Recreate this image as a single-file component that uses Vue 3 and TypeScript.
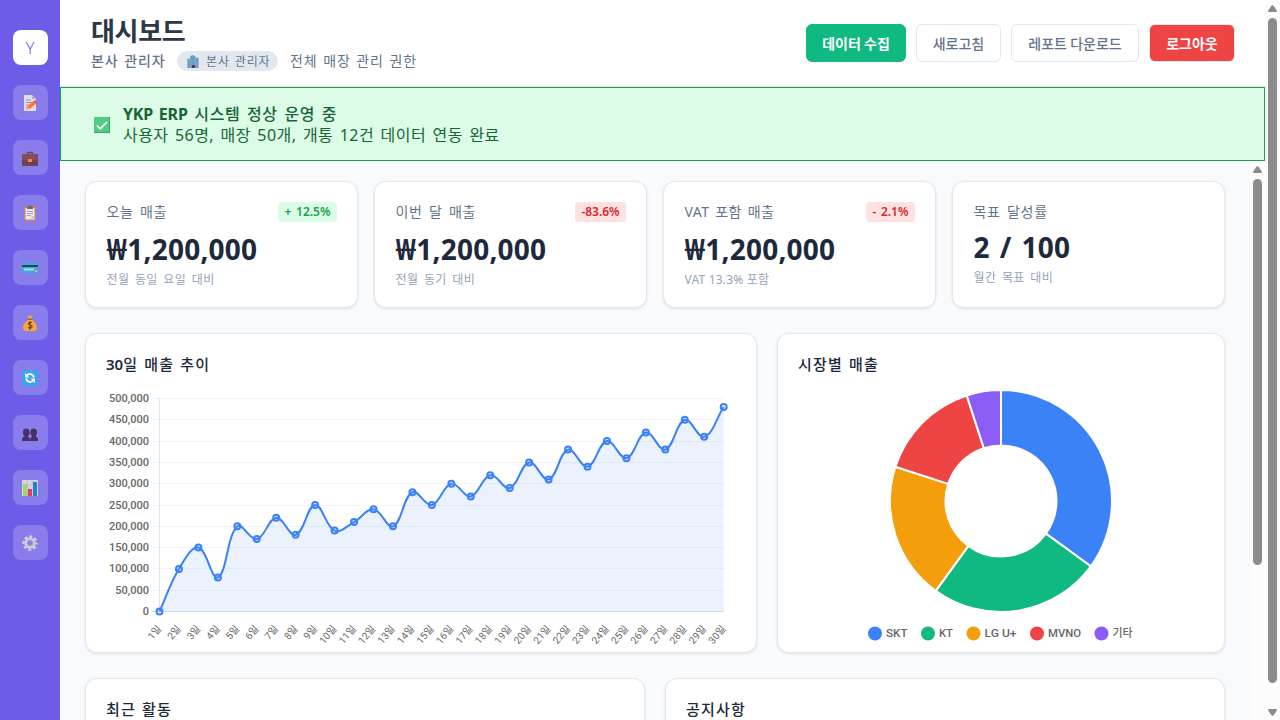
<script setup lang="ts">
interface Point { x: number; y: number }

const navIcons = ['memo', 'briefcase', 'clipboard', 'card', 'money', 'refresh', 'people', 'bars', 'gear']

const stats = [
  { label: '오늘 매출', value: '₩1,200,000', note: '전월 동일 요일 대비', badge: '+ 12.5%', tone: 'up', width: 59 },
  { label: '이번 달 매출', value: '₩1,200,000', note: '전월 동기 대비', badge: '-83.6%', tone: 'down', width: 51 },
  { label: 'VAT 포함 매출', value: '₩1,200,000', note: 'VAT 13.3% 포함', badge: '- 2.1%', tone: 'down', width: 49 },
  { label: '목표 달성률', value: '2 / 100', note: '월간 목표 대비', badge: '', tone: '', width: 0 },
]

// Daily sales in thousands of won
const sales = [0, 100, 150, 80, 200, 170, 220, 180, 250, 190, 210, 240, 200, 280, 250, 300, 270, 320, 290, 350, 310, 380, 340, 400, 360, 420, 380, 450, 410, 480]

const left = 73.5
const right = 637.7
const top = 64.5
const bottom = 277.5

const points: Point[] = sales.map((v, i) => ({
  x: left + (i * (right - left)) / (sales.length - 1),
  y: bottom - (v / 500) * (bottom - top),
}))

const ticks = Array.from({ length: 11 }, (_, i) => ({
  y: Math.floor(top + (i * (bottom - top)) / 10) + 0.5,
  label: ((10 - i) * 50000).toLocaleString('en-US'),
}))

function smooth(pts: Point[], tension: number): string {
  const clamp = (y: number) => Math.min(bottom, Math.max(top, y))
  const controls = pts.map((p, i) => {
    const a = pts[Math.max(0, i - 1)]
    const b = pts[Math.min(pts.length - 1, i + 1)]
    const d1 = Math.hypot(p.x - a.x, p.y - a.y)
    const d2 = Math.hypot(b.x - p.x, b.y - p.y)
    const f1 = (tension * d1) / (d1 + d2)
    const f2 = (tension * d2) / (d1 + d2)
    return {
      before: { x: p.x - f1 * (b.x - a.x), y: clamp(p.y - f1 * (b.y - a.y)) },
      after: { x: p.x + f2 * (b.x - a.x), y: clamp(p.y + f2 * (b.y - a.y)) },
    }
  })
  let d = `M${pts[0].x} ${pts[0].y}`
  for (let i = 1; i < pts.length; i++) {
    const c1 = controls[i - 1].after
    const c2 = controls[i].before
    d += `C${c1.x} ${c1.y} ${c2.x} ${c2.y} ${pts[i].x} ${pts[i].y}`
  }
  return d
}

const linePath = smooth(points, 0.4)
const areaPath = `${linePath}V${bottom}H${left}Z`

const shares = [
  { name: 'SKT', value: 35, color: '#3b82f6', x: 90, len: 21.5 },
  { name: 'KT', value: 25, color: '#10b981', x: 143, len: 14 },
  { name: 'LG U+', value: 20, color: '#f59e0b', x: 188.5, len: 32 },
  { name: 'MVNO', value: 15, color: '#ef4444', x: 252, len: 33 },
  { name: '기타', value: 5, color: '#8b5cf6', x: 316.5, len: 20 },
]

const cx = 223
const cy = 167
function slice(from: number, to: number): string {
  const at = (pct: number, r: number) => {
    const a = (pct / 100) * Math.PI * 2
    return `${cx + r * Math.sin(a)} ${cy - r * Math.cos(a)}`
  }
  return `M${at(from, 111)}A111 111 0 0 1 ${at(to, 111)}L${at(to, 55.5)}A55.5 55.5 0 0 0 ${at(from, 55.5)}Z`
}
let total = 0
const slices = shares.map((s) => {
  const from = total
  total += s.value
  return { color: s.color, d: slice(from, total) }
})
</script>

<template>
  <div class="app">
    <nav class="sidebar">
      <div class="logo">Y</div>
      <div v-for="icon in navIcons" :key="icon" class="nav-item">
        <svg viewBox="0 0 16 16" width="16" height="16">
          <g v-if="icon === 'memo'">
            <path d="M2 0h8l4 4v12H2z" fill="#e6e1ea" /><path d="M10 0v4h4z" fill="#b9b2c6" />
            <path d="M4 5h5M4 7.500h7M4 10h3M4 12.500h2" stroke="#9b95a8" />
            <path d="M4.500 14.500l1-3.500 6-5 2.500 2.800-6 5z" fill="#f97b2b" /><path d="M11.500 6l1.400-1 2.300 2.500L14 8.800z" fill="#f2495c" />
            <path d="M4.500 14.500l1-3.500 2.500 2.800z" fill="#fbb15a" />
          </g>
          <g v-else-if="icon === 'briefcase'" transform="translate(0 .5)">
            <path d="M5.500 4V3q0-1 1-1h3q1 0 1 1v1" fill="none" stroke="#69434e" stroke-width="1.300" />
            <rect y="3.500" width="16" height="12" rx="1" fill="#6d4048" /><path d="M0 4.500q0-1 1-1h14q1 0 1 1V9q-8 2-16 0z" fill="#804d50" />
            <rect x="6" y="8.500" width="4" height="3" rx=".5" fill="#f08b58" />
          </g>
          <g v-else-if="icon === 'clipboard'">
            <rect x="2" y="1" width="12" height="15" rx="1" fill="#c98556" /><path d="M3.500 3h9v11.500h-9z" fill="#f1edf6" /><path d="M12.500 11.500H9.500v3z" fill="#bdb4c8" />
            <path d="M5 1.500h1.500Q8-.5 9.500 1.500H11V4H5z" fill="#6a6374" /><path d="M5 6.500h6M5 8.500h6M5 10.500h4" stroke="#a39cac" stroke-width=".9" />
          </g>
          <g v-else-if="icon === 'card'" transform="translate(0 3)">
            <rect width="16" height="10" rx="1" fill="#32b4dc" /><path d="M0 2h16v2H0z" fill="#31384e" />
            <rect x="2" y="5.500" width="10" height="2" fill="#b9d8e3" /><rect x="13" y="7.500" width="2" height="1.500" fill="#fbc64a" />
          </g>
          <g v-else-if="icon === 'money'">
            <path d="M5.500 0l1.500 1 1-1 1 1 1.500-1-1 4h-3z" fill="#f4ac36" /><path d="M5.500 5h5q4.500 4 4.500 8 0 3-3 3H4q-3 0-3-3 0-4 4.500-8z" fill="#fbac2e" />
            <path d="M5.500 4.300h5" stroke="#a65a27" stroke-width="1.200" />
            <path d="M10 7.800Q8 6.600 6.700 8q-.7 1.500 1.300 2 2.500.5 2 2-1.300 1.700-3.800.4M8 6v9" fill="none" stroke="#694429" stroke-width="1.200" />
          </g>
          <g v-else-if="icon === 'refresh'">
            <rect width="16" height="16" rx="1" fill="#38a6ef" />
            <path d="M4.500 5.500Q8 2.500 11 5.500L12 7.500M11.500 10.500Q8 13.500 5 10.500L4 8.500" fill="none" stroke="#fff" stroke-width="1.900" />
            <path d="M3 3v4.500h4.500zM13 13V8.500H8.500z" fill="#fff" />
          </g>
          <g v-else-if="icon === 'people'" fill="#432c61" transform="translate(0 1)">
            <ellipse cx="4.300" cy="6.500" rx="3.300" ry="4" /><ellipse cx="11.700" cy="6.500" rx="3.300" ry="4" />
            <path d="M0 15v-2q0-2 2.500-2.500L3 9h3v2q2 .5 2 2 0-1.500 2-2V9h3l.5 1.500Q16 11 16 13v2z" />
            <path d="M8 11.500V15" stroke="#6d5a8c" stroke-width=".6" />
          </g>
          <g v-else-if="icon === 'bars'">
            <rect width="16" height="16" rx=".6" fill="#ded9e5" /><path d="M0 5h16M5.500 0v16M11 0v16" stroke="#b8b0c3" stroke-width=".6" />
            <rect x="1" y="4" width="4" height="12" fill="#9be25b" /><rect x="6" y="9" width="4" height="7" fill="#e63868" /><rect x="11" y="2" width="4" height="14" fill="#1687cb" />
          </g>
          <g v-else fill="none" stroke="#d3cede">
            <circle cx="8" cy="8" r="6.200" stroke-width="3" stroke-dasharray="2.900 1.969" stroke-dashoffset="1.450" />
            <circle cx="8" cy="8" r="4" stroke-width="3.400" /><circle cx="8" cy="8" r="2.800" stroke="#a39bb2" stroke-width="1" />
          </g>
        </svg>
      </div>
    </nav>

    <main class="main">
      <header class="header">
        <div>
          <h1>대시보드</h1>
          <div class="user">
            <span class="name">본사 관리자</span>
            <span class="role">
              <svg viewBox="0 0 14 14" width="14" height="13">
                <path d="M1 4h3V14H1zM10 3h3v11h-3z" fill="#8793aa" /><path d="M4 1l3-1 3 2v12H4z" fill="#729bb9" />
                <path d="M5.500 2v8M8 2v8M2.500 5v6M11.500 4v7" stroke="#48b7df" stroke-width="1.300" stroke-dasharray="2 .7" /><path d="M6 11h3v3H6z" fill="#3e3349" />
              </svg>
              <span>본사 관리자</span>
            </span>
            <span class="scope">전체 매장 관리 권한</span>
          </div>
        </div>
        <div class="actions">
          <button class="btn primary">데이터 수집</button>
          <button class="btn refresh">새로고침</button>
          <button class="btn report">레포트 다운로드</button>
          <button class="btn danger">로그아웃</button>
        </div>
      </header>

      <section class="banner">
        <svg viewBox="0 0 16 16" width="16" height="16">
          <rect width="16" height="16" rx="1" fill="#4dce82" /><path d="M0 15h16v1H0zM15 0h1v16h-1z" fill="#36a765" />
          <path d="M3 8.500l3.300 3.200L13 5" fill="none" stroke="#fff" stroke-width="1.700" />
        </svg>
        <div class="banner-text">
          <strong><b>YKP ERP</b> 시스템 정상 운영 중</strong>
          <span>사용자 56명, 매장 50개, 개통 12건 데이터 연동 완료</span>
        </div>
      </section>

      <div class="body">
        <div class="content">
          <div class="stats">
            <article v-for="s in stats" :key="s.label" class="card stat" :class="{ plain: !s.badge }">
              <div class="stat-head">
                <span class="label">{{ s.label }}</span>
                <span v-if="s.badge" class="badge" :class="s.tone" :style="{ width: s.width + 'px' }">{{ s.badge }}</span>
              </div>
              <div class="value">{{ s.value }}</div>
              <div class="note">{{ s.note }}</div>
            </article>
          </div>

          <div class="charts">
            <article class="card chart">
              <h2><b>30</b>일 매출 추이</h2>
              <svg class="plot" viewBox="0 0 670 318" width="670" height="318">
                <g v-for="t in ticks" :key="t.label">
                  <path :d="`M66 ${t.y}H${right}`" stroke="#f1f5f9" />
                  <text class="amount" x="63" :y="t.y + 3.500" text-anchor="end">{{ t.label }}</text>
                </g>
                <path :d="`M73.500 ${top}V${bottom}`" stroke="#e2e4e8" />
                <path :d="`M66 ${bottom}H${right}`" stroke="#dcdfe4" />
                <path :d="areaPath" fill="#3b82f6" fill-opacity=".1" />
                <path :d="linePath" fill="none" stroke="#3b82f6" stroke-width="2" />
                <circle v-for="(p, i) in points" :key="i" :cx="p.x" :cy="p.y" r="3" fill="#3b82f6" fill-opacity=".1" stroke="#3b82f6" stroke-width="2" />
                <text v-for="(p, i) in points" :key="'d' + i" class="day" :transform="`translate(${p.x + 2.500} 295) rotate(-50)`" text-anchor="end">{{ i + 1 }}일</text>
              </svg>
            </article>
            <article class="card chart">
              <h2>시장별 매출</h2>
              <svg class="plot" viewBox="0 0 446 318" width="446" height="318">
                <path v-for="s in slices" :key="s.color" :d="s.d" :fill="s.color" stroke="#fff" stroke-width="2" stroke-linejoin="bevel" />
                <g v-for="s in shares" :key="s.name">
                  <circle :cx="s.x + 7" cy="299.500" r="7" :fill="s.color" />
                  <text class="legend" :x="s.x + 18" y="303" :textLength="s.len" lengthAdjust="spacingAndGlyphs">{{ s.name }}</text>
                </g>
              </svg>
            </article>
          </div>

          <div class="lower">
            <article class="card"><h2>최근 활동</h2></article>
            <article class="card"><h2>공지사항</h2></article>
          </div>
        </div>
        <div class="scroll inner">
          <svg viewBox="0 0 9 7" width="9" height="7"><path d="M4.500 0Q5.500 0 9 6 9 7 8 7H1Q0 7 0 6 3.500 0 4.500 0z" /></svg>
          <i class="thumb"></i>
        </div>
      </div>
    </main>

    <div class="scroll outer">
      <svg viewBox="0 0 9 7" width="9" height="7"><path d="M4.500 0Q5.500 0 9 6 9 7 8 7H1Q0 7 0 6 3.500 0 4.500 0z" /></svg>
      <i class="thumb"></i>
      <svg class="down" viewBox="0 0 9 7" width="9" height="7"><path d="M4.500 7Q5.500 7 9 1 9 0 8 0H1Q0 0 0 1 3.500 7 4.500 7z" /></svg>
    </div>
  </div>
</template>

<style>
body { overflow: hidden; }
</style>

<style scoped>
* { box-sizing: border-box; }
.app { display: flex; width: 1280px; height: 720px; overflow: hidden; background: #f8fafc; font-family: "Noto Sans", "Noto Sans CJK KR", sans-serif; white-space: nowrap; }
svg { display: block; flex: none; }
.sidebar { width: 60px; height: 720px; flex: none; padding-top: 30px; display: flex; flex-direction: column; align-items: center; gap: 20px; background: #6c5ce7; }
.logo, .nav-item { width: 35px; height: 35px; border-radius: 8px; display: flex; align-items: center; justify-content: center; flex: none; }
.logo { background: #fff; color: #6c5ce7; font-size: 16px; font-weight: 300; }
.nav-item { background: rgba(255, 255, 255, .2); padding-top: 1px; }
.nav-item svg { opacity: .95; }

.main { width: 1205px; flex: none; display: flex; flex-direction: column; }
.header { height: 87px; flex: none; padding: 0 30px; display: flex; justify-content: space-between; background: #fff; border-bottom: 1px solid #e2e8f0; }
h1 { margin: 13px 0 0 1px; color: #2d3748; font-size: 26px; line-height: 36px; font-weight: 700; letter-spacing: -.3px; }
.user { display: flex; align-items: center; height: 20px; margin-top: 2px; color: #64748b; font-size: 14px; line-height: 20px; letter-spacing: .8px; word-spacing: 1.5px; }
.name { width: 87px; padding-left: 1px; font-weight: 500; }
.role { width: 101px; height: 20px; padding-left: 9px; display: flex; align-items: center; gap: 6px; border-radius: 10px; background: #e2e8f0; font-size: 12px; letter-spacing: .85px; word-spacing: 1px; }
.role span { padding-top: 1px; }
.scope { margin-left: 12px; letter-spacing: .85px; word-spacing: 1.2px; }
.actions { display: flex; gap: 10px; padding-top: 24px; }
.btn { height: 38px; padding: 0; border: 1px solid #e2e8f0; border-radius: 6px; background: #fff; color: #64748b; font: 500 14px/20px "Noto Sans CJK KR", sans-serif; }
.primary { width: 100px; border-color: #10b981; background: #10b981; color: #fff; font-weight: 700; }
.refresh { width: 85px; }
.report { width: 128px; }
.danger { width: 86px; background: #ef4444; color: #fff; font-weight: 700; }

.banner { height: 74px; flex: none; display: flex; align-items: center; padding-left: 33px; gap: 13px; border: 1px solid #16a34a; background: #dcfce7; color: #166534; }
.banner svg { margin-top: 2px; }
.banner-text { display: flex; flex-direction: column; padding-top: 2px; font-size: 16px; line-height: 21px; letter-spacing: .44px; word-spacing: 1.9px; }
.banner-text strong { font-weight: 500; letter-spacing: .62px; }
.banner-text b { font-weight: 700; letter-spacing: -.2px; }

.body { flex: 1; display: flex; min-height: 0; }
.content { width: 1190px; flex: none; padding: 20px 25px 0; display: flex; flex-direction: column; gap: 25px; }
.stats { display: grid; grid-template-columns: repeat(4, 1fr); gap: 16px; }
.card { background: #fff; border: 1px solid #e2e8f0; border-radius: 12px; box-shadow: 0 1px 3px rgba(0, 0, 0, .1); }
.stat { height: 127px; padding: 20px; }
.stat-head { height: 20px; display: flex; align-items: center; justify-content: space-between; }
.label { padding-left: .5px; color: #64748b; font-size: 14px; line-height: 20px; letter-spacing: .7px; word-spacing: 2px; }
.badge { height: 20px; border-radius: 4px; font-size: 12px; line-height: 20px; font-weight: 600; text-align: center; word-spacing: 1.5px; }
.up { background: #dcfce7; color: #16a34a; }
.down.badge { background: #fee2e2; color: #dc2626; }
.value { margin-top: 8px; padding-left: .5px; color: #1e293b; font-size: 28px; line-height: 38px; font-weight: 700; letter-spacing: .2px; word-spacing: 2.500px; }
.note { margin-top: 3px; padding-left: .5px; color: #94a3b8; font-size: 12px; line-height: 18px; letter-spacing: .4px; word-spacing: 2px; }
.stat:nth-child(3) .label { letter-spacing: .5px; word-spacing: 1.500px; }
.stat:nth-child(3) .note { letter-spacing: .2px; word-spacing: 0; }
.plain .stat-head { height: 19px; }
.plain .value { margin-top: 7px; }
.charts { display: grid; grid-template-columns: 672px 448px; gap: 20px; }
.chart { height: 320px; position: relative; }
h2 { margin: 20px 0 0 20px; color: #1e293b; font-size: 15px; line-height: 21px; font-weight: 500; letter-spacing: 1.2px; word-spacing: 1px; }
h2 b { font-weight: 600; letter-spacing: 0; }
.plot { position: absolute; left: 0; top: 0; font-family: Roboto, "Noto Sans CJK KR", sans-serif; font-size: 11px; fill: #666; }
.amount, .legend { font-weight: 500; }
.legend { font-size: 11.5px; }
.day { font-size: 10px; }
.lower { display: grid; grid-template-columns: 1fr 1fr; gap: 20px; }
.lower .card { height: 200px; }
.scroll { width: 15px; flex: none; display: flex; flex-direction: column; align-items: center; padding-top: 5px; background: #fcfcfc; fill: #8b8b8b; }
.thumb { width: 9px; height: 665px; flex: none; margin-top: 6px; border-radius: 5px; background: #8b8b8b; }
.inner .thumb { height: 386px; }
.outer { height: 720px; }
.outer .down { margin-top: 26px; }
</style>
